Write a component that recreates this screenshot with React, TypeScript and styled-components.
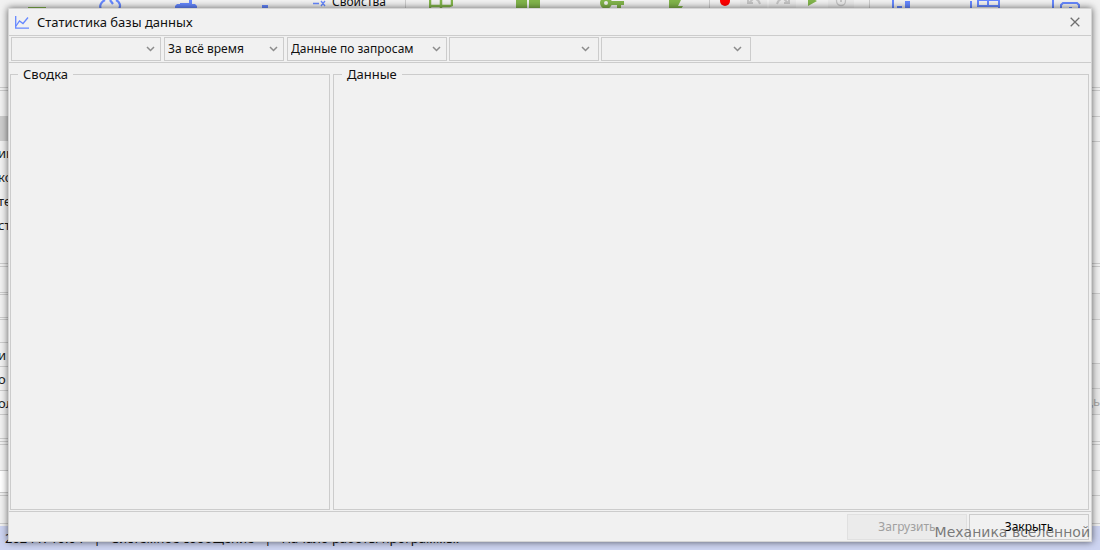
import React from "react";
import styled, { createGlobalStyle } from "styled-components";

const LINE = "#cccccc";
const BLUE = "#6688ff";
const GREEN = "#82b54b";
const FACE = "#f1f1f1";

const GlobalStyle = createGlobalStyle`
  *, *::before, *::after { box-sizing: border-box; }
  body {
    margin: 0;
    background: ${FACE};
    color: #111;
    font: 13px/20px "Noto Sans", "Open Sans", sans-serif;
  }
`;

const Page = styled.div`
  position: relative;
  display: flex;
  flex-direction: column;
  min-height: 100vh;
  overflow: hidden;
`;

/* main window behind the dialog */

const Toolbar = styled.header`
  display: flex;
  align-items: flex-start;
  height: 88px;
  border-bottom: 1px solid ${LINE};
  overflow: hidden;
`;

const Cell = styled.div<{ $width: number; $shaded?: boolean }>`
  flex: none;
  display: flex;
  justify-content: center;
  width: ${(p) => p.$width}px;
  height: 24px;
  background: ${(p) => (p.$shaded ? "#eaeaea" : "transparent")};
`;

const Separator = styled.div`
  flex: none;
  width: 1px;
  height: 80px;
  background: ${LINE};
`;

const PropertiesCell = styled.div`
  flex: none;
  display: flex;
  gap: 6px;
  width: 101px;
  height: 12px;
  padding-left: 8px;
  align-items: flex-end;
  font-size: 12px;
  line-height: 20px;
  & > svg { align-self: flex-start; }
`;

const Workspace = styled.div`
  flex: 1;
  display: grid;
  grid-template-columns: 1fr 1fr;
`;

const Side = styled.div<{ $end?: boolean }>`
  display: flex;
  flex-direction: column;
  text-align: ${(p) => (p.$end ? "right" : "left")};
  text-indent: ${(p) => (p.$end ? 0 : -2)}px;
`;

const Band = styled.div<{ $height: number; $fill?: string; $plain?: boolean; $muted?: boolean }>`
  flex: none;
  height: ${(p) => p.$height}px;
  background: ${(p) => p.$fill ?? "transparent"};
  border-bottom: ${(p) => (p.$plain ? "none" : `1px solid ${LINE}`)};
  color: ${(p) => (p.$muted ? "#aaa" : "#222")};
  line-height: 24px;
`;

const StatusBar = styled.footer`
  display: flex;
  gap: 10px;
  height: 24px;
  padding-left: 5px;
  background: #cdd4f1;
  line-height: 24px;
  white-space: nowrap;
`;

/* dialog */

const Dialog = styled.section`
  position: absolute;
  inset: 8px;
  display: flex;
  flex-direction: column;
  background: ${FACE};
  border: 1px solid #d4d4d4;
  box-shadow: 0 0 7px rgba(0, 0, 0, 0.6);
`;

const TitleBar = styled.header`
  display: flex;
  align-items: center;
  height: 27px;
  padding: 0 9px 0 6px;
  gap: 8px;
  border-bottom: 1px solid ${LINE};
`;

const Title = styled.h1`
  flex: 1;
  margin: 0;
  font-size: 13px;
  font-weight: 400;
  line-height: 20px;
`;

const CloseIcon = styled.button`
  display: flex;
  align-items: center;
  justify-content: center;
  width: 14px;
  height: 20px;
  padding: 0;
  border: 0;
  background: none;
`;

const Filters = styled.form`
  display: flex;
  gap: 2px;
  padding: 1px 2px;
  height: 27px;
  border-bottom: 1px solid ${LINE};
`;

const FilterGroup = styled.div<{ $gap: number }>`
  display: flex;
  gap: ${(p) => p.$gap}px;
`;

const Combo = styled.div<{ $width: number; $inset: number }>`
  display: grid;
  align-items: center;
  width: ${(p) => p.$width}px;
  height: 24px;
  & > * { grid-area: 1 / 1; }
  & > svg {
    justify-self: end;
    margin-right: ${(p) => p.$inset}px;
    pointer-events: none;
  }
`;

const Select = styled.select`
  appearance: none;
  width: 100%;
  height: 24px;
  margin: 0;
  padding: 0 16px 0 3px;
  border: 1px solid ${LINE};
  border-radius: 0;
  background: ${FACE};
  color: #111;
  font: 12px/20px "Noto Sans", "Open Sans", sans-serif;
`;

const Panels = styled.div`
  flex: 1;
  display: grid;
  grid-template-columns: 320px 1fr;
  gap: 3px;
  padding: 1px 2px 1px 1px;
`;

const Panel = styled.fieldset<{ $indent: number }>`
  min-width: 0;
  margin: 0;
  padding: 0 0 0 ${(p) => p.$indent}px;
  border: 1px solid ${LINE};
`;

const Legend = styled.legend`
  padding: 0 5px;
  font-size: 13px;
  line-height: 20px;
`;

const Actions = styled.footer`
  display: flex;
  justify-content: flex-end;
  gap: 2px;
  height: 30px;
  padding: 2px;
  border-top: 1px solid ${LINE};
`;

const ActionButton = styled.button`
  width: 120px;
  height: 26px;
  padding: 0;
  border: 1px solid ${LINE};
  background: ${FACE};
  color: #000;
  font: 12px/20px "Noto Sans", "Open Sans", sans-serif;
  &:disabled {
    border-color: #e0e0e0;
    background: #ebebeb;
    color: #a0a0a0;
  }
`;

const Watermark = styled.div`
  position: absolute;
  right: 10px;
  bottom: 8px;
  color: rgba(90, 90, 90, 0.8);
  font: 14px/20px "DejaVu Sans", sans-serif;
  pointer-events: none;
`;

function Art({ w, children }: { w: number; children: React.ReactNode }) {
  return (
    <svg width={w} height="9" viewBox={`0 0 ${w} 9`} fill="none" aria-hidden="true">
      {children}
    </svg>
  );
}

type ComboProps = { label: string; value?: string; width: number; inset?: number };

function ComboBox({ label, value = "", width, inset = 6 }: ComboProps) {
  return (
    <Combo $width={width} $inset={inset}>
      <Select aria-label={label} defaultValue={value}>
        <option value={value}>{value}</option>
      </Select>
      <svg width="9" height="6" viewBox="0 0 9 6" fill="none" aria-hidden="true">
        <path d="M1 1l3.5 3.5L8 1" stroke="#8c8c8c" strokeWidth="1.5" />
      </svg>
    </Combo>
  );
}

export default function App() {
  return (
    <Page>
      <GlobalStyle />
      <Toolbar>
        <Cell $width={74}><Art w={20}><path d="M1 7h18v2H1z" fill={GREEN} /></Art></Cell>
        <Cell $width={72}>
          <Art w={24}>
            <path d="M3 9C1 6 3 2 7 0M12 0l3 4M18 0c4 2 5 6 3 9" stroke={BLUE} strokeWidth="2.2" />
          </Art>
        </Cell>
        <Cell $width={80}>
          <Art w={22}>
            <path d="M0 9V6l2-2h18l2 2v3zM5 3h12v2H5zM14 0h3v5h-3z" fill={BLUE} />
          </Art>
        </Cell>
        <Cell $width={78}><Art w={8}><path d="M1 5h6v4H1z" fill={BLUE} /></Art></Cell>
        <PropertiesCell>
          <Art w={14}>
            <path d="M1 3.500h6M9 1l4 5M13 1L9 6" stroke={BLUE} strokeWidth="1.3" />
          </Art>
          <span>Свойства</span>
        </PropertiesCell>
        <Separator />
        <Cell $width={70}>
          <Art w={24}><path d="M1 0v9M12 0v9M23 0v5l-2 1M1 6h20" stroke={GREEN} strokeWidth="2.5" /></Art>
        </Cell>
        <Cell $width={104}><Art w={24}><path d="M0 0h11v9H0zM13 0h11v9H13z" fill={GREEN} /></Art></Cell>
        <Cell $width={64}>
          <Art w={24}>
            <circle cx="6" cy="3" r="4" stroke={GREEN} strokeWidth="4" />
            <path d="M10 1h14v4h-3v4h-4V5h-7z" fill={GREEN} />
          </Art>
        </Cell>
        <Cell $width={65}><Art w={15}><path d="M0 0h12L9 6h5l-2 3H0z" fill={GREEN} /></Art></Cell>
        <Separator />
        <Cell $width={30}><Art w={12}><circle cx="6" cy="1" r="5" fill="#ff0000" /></Art></Cell>
        <Cell $width={27} $shaded>
          <Art w={14}><path d="M1 0v3h5M2 3l4-4c4-1 6 2 7 5" stroke="#c4c4c4" strokeWidth="2" /></Art>
        </Cell>
        <Cell $width={2} />
        <Cell $width={27} $shaded>
          <Art w={14}><path d="M13 0v3H8M12 3L8-1C4-2 2 1 1 4" stroke="#c4c4c4" strokeWidth="2" /></Art>
        </Cell>
        <Cell $width={32}><Art w={10}><path d="M1-4l9 5-9 5z" fill={GREEN} /></Art></Cell>
        <Cell $width={26} $shaded>
          <Art w={12}>
            <circle cx="6" cy="1" r="4.5" stroke="#c4c4c4" strokeWidth="1.3" />
            <path d="M5 0h2v2H5z" fill="#c4c4c4" />
          </Art>
        </Cell>
        <Cell $width={15} />
        <Separator />
        <Cell $width={64}>
          <Art w={20}><path d="M0 0h2v9H0zM5 6h5v3H5zM13 1h5v8h-5z" fill={BLUE} /></Art>
        </Cell>
        <Cell $width={102}>
          <Art w={30}>
            <path d="M1 1v8M8 0v6M18 0v6M29 0v9M7 6h22M7 0h22" stroke={BLUE} strokeWidth="2" />
          </Art>
        </Cell>
        <Cell $width={60}>
          <Art w={30}>
            <path d="M2 0v9M10 9V5l2-2h14l2 2v4" stroke={BLUE} strokeWidth="2" />
            <path d="M18 7h3v1h-3z" fill={BLUE} />
          </Art>
        </Cell>
      </Toolbar>

      <Workspace>
        <Side>
          <Band $height={3} />
          <Band $height={25} $plain />
          <Band $height={25} $plain $fill="#cccccc" />
          <Band $height={24} $plain>ищ</Band>
          <Band $height={24} $plain>ко</Band>
          <Band $height={24} $plain>те</Band>
          <Band $height={24} $plain>ст</Band>
          <Band $height={27} />
          <Band $height={3} />
          <Band $height={26} />
          <Band $height={2} />
          <Band $height={23} />
          <Band $height={2} />
          <Band $height={23} />
          <Band $height={24}>и</Band>
          <Band $height={24}>о</Band>
          <Band $height={24}>ол</Band>
          <Band $height={24} />
          <Band $height={3} />
          <Band $height={3} />
          <Band $height={26} />
          <Band $height={22} $fill="#ffffff" />
          <Band $height={3} />
          <Band $height={28} />
        </Side>
        <Side $end>
          <Band $height={3} />
          <Band $height={26} />
          <Band $height={25} />
          <Band $height={122} />
          <Band $height={3} />
          <Band $height={27} />
          <Band $height={26} $fill="#e9e9e9" />
          <Band $height={44} />
          <Band $height={25} $fill="#e9e9e9" />
          <Band $height={26} $fill="#e9e9e9" $muted>Очередь</Band>
          <Band $height={27} />
          <Band $height={3} />
          <Band $height={26} />
          <Band $height={25} />
          <Band $height={28} />
        </Side>
      </Workspace>

      <StatusBar>
        <span>2024 г. 10:04</span>
        <span>|</span>
        <span>Системное сообщение</span>
        <span>|</span>
        <span>Начало работы программы.</span>
      </StatusBar>

      <Dialog role="dialog" aria-labelledby="stats-title">
        <TitleBar>
          <svg width="14" height="13" viewBox="0 0 14 13" fill="none" aria-hidden="true">
            <path d="M.7 0v12.2H14" stroke={BLUE} strokeWidth="1.3" />
            <path d="M1 10l3.5-5 3.500 2.500L13 1.500" stroke={BLUE} strokeWidth="1.3" />
          </svg>
          <Title id="stats-title">Статистика базы данных</Title>
          <CloseIcon type="button" aria-label="Закрыть окно">
            <svg width="10" height="10" viewBox="0 0 10 10" fill="none" aria-hidden="true">
              <path d="M.7.7l8.600 8.600M9.300.7L.7 9.300" stroke="#707070" strokeWidth="1.3" />
            </svg>
          </CloseIcon>
        </TitleBar>
        <Filters>
          <FilterGroup $gap={3}>
            <ComboBox label="База данных" width={150} />
            <ComboBox label="Период" value="За всё время" width={120} />
            <ComboBox label="Вид данных" value="Данные по запросам" width={160} />
          </FilterGroup>
          <FilterGroup $gap={2}>
            <ComboBox label="Запрос" width={150} inset={9} />
            <ComboBox label="Показатель" width={150} inset={9} />
          </FilterGroup>
        </Filters>
        <Panels>
          <Panel $indent={7}><Legend>Сводка</Legend></Panel>
          <Panel $indent={8}><Legend>Данные</Legend></Panel>
        </Panels>
        <Actions>
          <ActionButton type="button" disabled>Загрузить</ActionButton>
          <ActionButton type="button">Закрыть</ActionButton>
        </Actions>
      </Dialog>
      <Watermark>Механика вселенной</Watermark>
    </Page>
  );
}
